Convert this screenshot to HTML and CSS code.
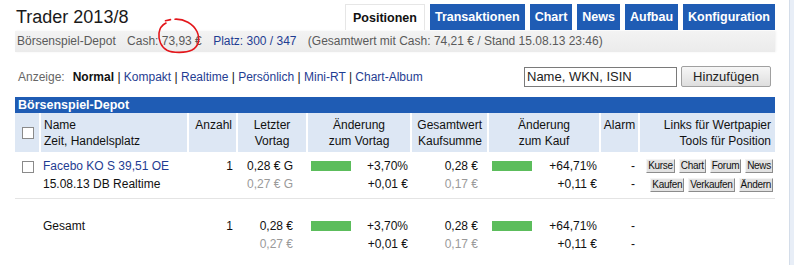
FILE: index.html
```html
<!DOCTYPE html>
<html lang="de">
<head>
<meta charset="utf-8">
<title>Trader 2013/8</title>
<link rel="stylesheet" href="styles.css">
</head>
<body>
<div class="page">
  <div class="main">
    <header class="top">
      <h1 class="title">Trader 2013/8</h1>
      <nav class="tabs">
        <a class="tab active">Positionen</a>
        <a class="tab">Transaktionen</a>
        <a class="tab">Chart</a>
        <a class="tab">News</a>
        <a class="tab">Aufbau</a>
        <a class="tab">Konfiguration</a>
      </nav>
    </header>
    <div class="infobar">
      <span>Börsenspiel-Depot</span>
      <span class="seg">Cash: 73,93 €</span>
      <a class="seg link">Platz: 300 / 347</a>
      <span class="seg">(Gesamtwert mit Cash: 74,21 € / Stand 15.08.13 23:46)</span>
    </div>
    <div class="toolbar">
      <div class="views"><span class="lbl">Anzeige:</span><b>Normal</b> | <a class="link">Kompakt</a> | <a class="link">Realtime</a> | <a class="link">Persönlich</a> | <a class="link">Mini-RT</a> | <a class="link">Chart-Album</a></div>
      <div class="search">
        <input class="field" type="text" value="Name, WKN, ISIN">
        <button class="add" type="button">Hinzufügen</button>
      </div>
    </div>
    <div class="caption">Börsenspiel-Depot</div>
    <table class="depot">
      <colgroup>
        <col class="c-chk"><col class="c-name"><col class="c-qty"><col class="c-last"><col class="c-chg"><col class="c-tot"><col class="c-buy"><col class="c-alarm"><col class="c-links">
      </colgroup>
      <thead>
        <tr>
          <th class="chk first"><span class="box"></span></th>
          <th class="left">Name<br>Zeit, Handelsplatz</th>
          <th class="right r4">Anzahl</th>
          <th class="center">Letzter<br>Vortag</th>
          <th class="center">Änderung<br>zum Vortag</th>
          <th class="right r5">Gesamtwert<br>Kaufsumme</th>
          <th class="center">Änderung<br>zum Kauf</th>
          <th class="center">Alarm</th>
          <th class="right r4">Links für Wertpapier<br>Tools für Position</th>
        </tr>
      </thead>
      <tbody>
        <tr class="pos">
          <td class="chk"><span class="box"></span></td>
          <td class="left"><a class="link">Facebo KO S 39,51 OE</a><br>15.08.13 DB Realtime</td>
          <td class="right r4">1</td>
          <td class="right r14">0,28 € G<br><span class="muted">0,27 € G</span></td>
          <td class="r3"><div class="barline"><span class="bar"></span><span>+3,70%</span></div><div class="right">+0,01 €</div></td>
          <td class="right r10">0,28 €<br><span class="muted">0,17 €</span></td>
          <td class="r3"><div class="barline"><span class="bar"></span><span>+64,71%</span></div><div class="right">+0,11 €</div></td>
          <td class="right r4">-<br>-</td>
          <td class="right r2">
            <div class="btns"><span class="sbtn">Kurse</span><span class="sbtn">Chart</span><span class="sbtn">Forum</span><span class="sbtn">News</span></div>
            <div class="btns"><span class="sbtn">Kaufen</span><span class="sbtn">Verkaufen</span><span class="sbtn">Ändern</span></div>
          </td>
        </tr>
        <tr class="sum">
          <td class="chk"></td>
          <td class="left">Gesamt</td>
          <td class="right r4">1</td>
          <td class="right r14">0,28 €<br><span class="muted">0,27 €</span></td>
          <td class="r3"><div class="barline"><span class="bar"></span><span>+3,70%</span></div><div class="right">+0,01 €</div></td>
          <td class="right r10">0,28 €<br><span class="muted">0,17 €</span></td>
          <td class="r3"><div class="barline"><span class="bar"></span><span>+64,71%</span></div><div class="right">+0,11 €</div></td>
          <td class="right r4">-<br>-</td>
          <td></td>
        </tr>
      </tbody>
    </table>
  </div>
  <div class="strip"></div>
</div>
<svg class="mark" width="60" height="50" viewBox="150 10 60 50" aria-hidden="true">
  <path d="M165.5,20.8 L170.5,19.6 M175,19.2 C184,18.8 193,23.5 197,31.5 C200.5,39.5 198.5,46.5 192,50 C186,53 173,53.2 167,50.2 C161,47 158.2,40 159,33 C159.6,28.5 162,25 166,23" fill="none" stroke="#e3161b" stroke-width="1.6" stroke-linecap="round"/>
</svg>
</body>
</html>
```

FILE: styles.css
```css
html, body {
  margin: 0;
  padding: 0;
  background: #fff;
}
body {
  position: relative;
  font-family: "Liberation Sans", Arial, sans-serif;
  font-size: 12px;
  color: #111;
}
.page {
  display: flex;
  min-height: 265px;
}
.main {
  width: 760px;
  margin-left: 15px;
}
.strip {
  margin-left: auto;
  width: 4px;
  background: #e8eef7;
  border-left: 1px solid #d4dde9;
}

/* top */
.top {
  display: flex;
  justify-content: space-between;
  align-items: flex-end;
  padding-top: 4px;
  height: 26px;
}
.title {
  margin: 0 0 3px 1px;
  font-size: 18px;
  font-weight: normal;
  line-height: 20px;
  color: #1a1a1a;
}
.tabs {
  display: flex;
  gap: 5px;
}
.tab {
  display: block;
  height: 26px;
  line-height: 26px;
  padding: 0 5px;
  font-size: 12.5px;
  font-weight: bold;
  color: #fff;
  background: #1f5cb4;
}
.tab.active {
  background: #fff;
  color: #111;
  height: 25px;
  padding: 0 7px;
  border: 1px solid #e6e6e6;
  border-bottom: 0;
}

/* info bar */
.infobar {
  margin-top: 1px;
  height: 21px;
  line-height: 21px;
  padding-left: 2px;
  color: #5a5a5a;
  background: linear-gradient(#f3f3f3, #ebebeb);
  box-shadow: 1px 0 2px rgba(0,0,0,0.06);
  white-space: nowrap;
}
.seg {
  margin-left: 8px;
}
.link {
  color: #1f3d92;
  text-decoration: none;
}

/* toolbar */
.toolbar {
  display: flex;
  justify-content: space-between;
  align-items: center;
  margin-top: 14px;
  height: 21px;
  padding-left: 3px;
}
.views {
  color: #111;
}
.lbl {
  color: #666;
  margin-right: 8px;
}
.search {
  display: flex;
  align-items: center;
  gap: 4px;
  margin-right: 4px;
}
.field {
  box-sizing: border-box;
  width: 153px;
  height: 20px;
  margin: 0;
  padding: 0 2px;
  border: 1px solid #7a7a7a;
  font-family: "Liberation Sans", Arial, sans-serif;
  font-size: 13px;
  color: #222;
}
.add {
  box-sizing: border-box;
  width: 90px;
  height: 21px;
  margin: 0;
  padding: 0;
  border: 1px solid #a0a0a0;
  border-radius: 2px;
  background: linear-gradient(#f6f6f6, #dedede);
  font-family: "Liberation Sans", Arial, sans-serif;
  font-size: 13px;
  color: #222;
}

/* table */
.caption {
  margin-top: 10px;
  height: 16px;
  line-height: 16px;
  padding-left: 3px;
  background: #1f5cb4;
  color: #fff;
  font-weight: bold;
  font-size: 12.5px;
}
.depot {
  width: 760px;
  table-layout: fixed;
  border-collapse: collapse;
}
.c-chk { width: 25px; }
.c-name { width: 148px; }
.c-qty { width: 49px; }
.c-last { width: 70px; }
.c-chg { width: 104px; }
.c-tot { width: 77px; }
.c-buy { width: 112px; }
.c-alarm { width: 39px; }
.c-links { width: 136px; }

.depot th {
  background: #dde7f4;
  font-weight: normal;
  line-height: 16px;
  padding: 4px 0 3px 0;
  vertical-align: top;
  border-left: 2px solid #fff;
  white-space: nowrap;
}
.depot th.first { border-left: 0; }
.depot th.chk { vertical-align: middle; padding: 0; }
.depot td {
  line-height: 18px;
  padding: 5px 0 4px 0;
  vertical-align: top;
  white-space: nowrap;
}
.pos td { border-bottom: 1px solid #e4e4e4; }
.sum td { padding-top: 18px; }

.left { text-align: left; padding-left: 3px !important; }
.right { text-align: right; }
.center { text-align: center; }
.r2 { padding-right: 2px !important; }
.r3 { padding-right: 3px !important; }
.r4 { padding-right: 4px !important; }
.r5 { padding-right: 5px !important; }
.r10 { padding-right: 10px !important; }
.r14 { padding-right: 14px !important; }

.box {
  display: block;
  box-sizing: border-box;
  width: 12px;
  height: 12px;
  margin-left: 7px;
  border: 1px solid #8a8a8a;
  background: #fff;
}
td.chk .box { margin-top: 4px; }

.muted { color: #9a9a9a; }

.barline {
  display: flex;
  justify-content: space-between;
  align-items: center;
  padding-left: 4px;
}
.bar {
  display: block;
  width: 40px;
  height: 10px;
  background: #5cbd5c;
}

.btns {
  display: flex;
  justify-content: flex-end;
  align-items: center;
  gap: 4px;
  height: 18px;
}
.btns + .btns { margin-top: 1px; }
.sbtn {
  display: block;
  box-sizing: border-box;
  height: 14px;
  line-height: 12px;
  padding: 0 1px;
  font-size: 10px;
  letter-spacing: -0.3px;
  color: #111;
  background: #e2e2e2;
  border-right: 1px solid #8c8c8c;
  border-bottom: 1px solid #8c8c8c;
  border-top: 1px solid #f4f4f4;
  border-left: 1px solid #f4f4f4;
}

.mark {
  position: absolute;
  left: 150px;
  top: 10px;
}
```
